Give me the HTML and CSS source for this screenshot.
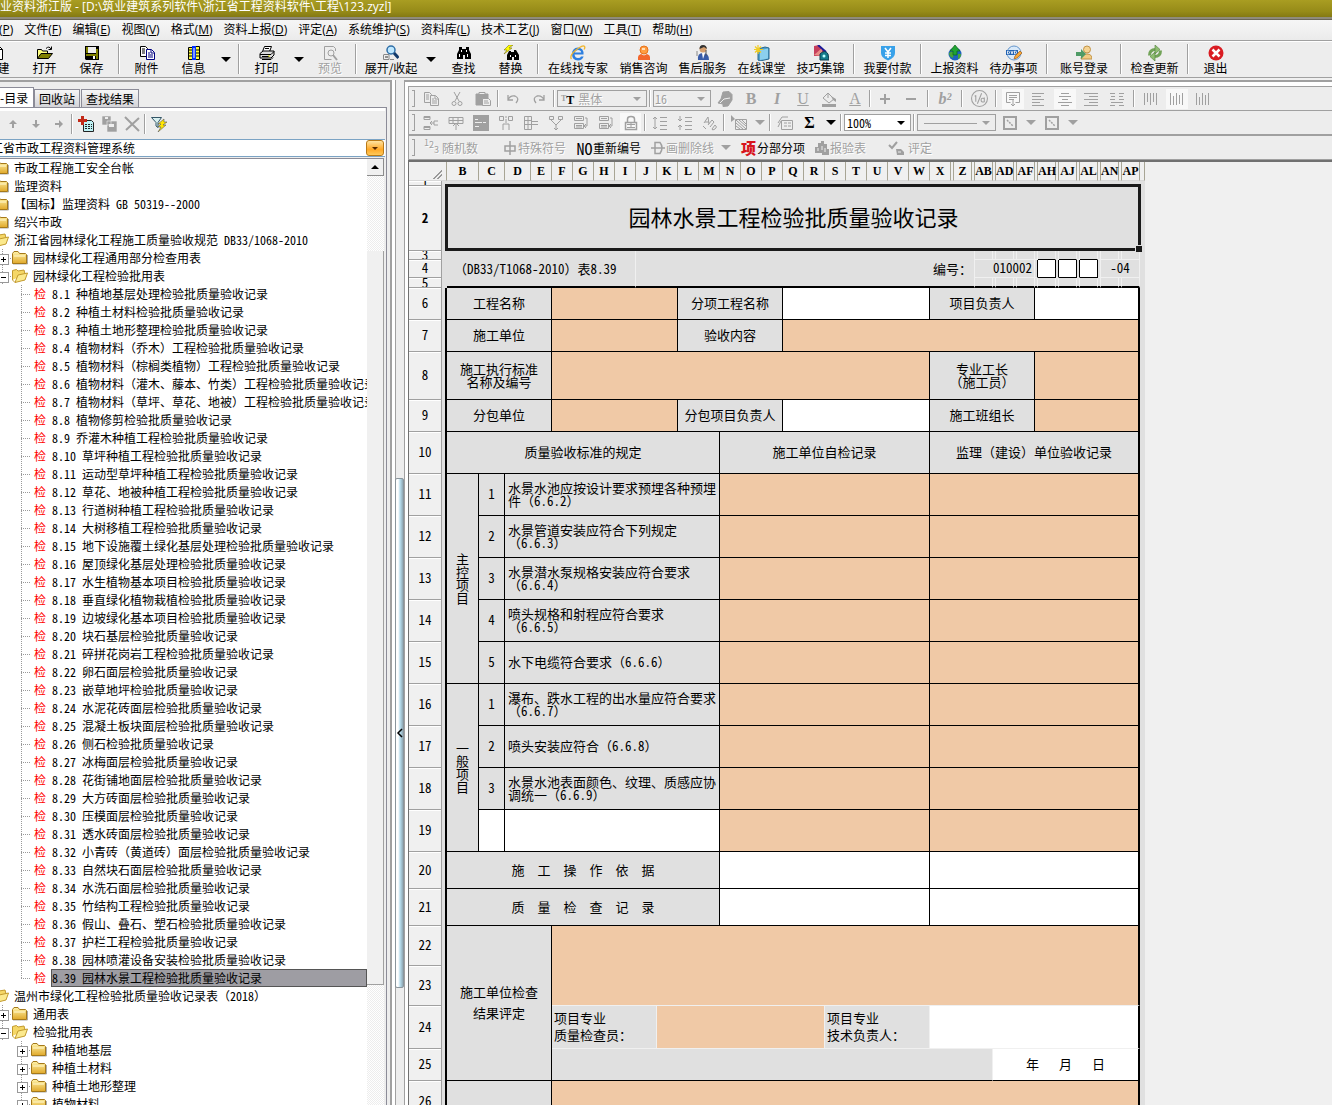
FILE: index.html
```html
<!DOCTYPE html>
<html lang="zh-CN">
<head>
<meta charset="utf-8">
<title>筑业资料浙江版</title>
<link rel="stylesheet" href="styles.css">
</head>
<body>
<svg class="defs" aria-hidden="true">
  <defs>
    <linearGradient id="gold" x1="0" y1="0" x2="0" y2="1"><stop offset="0" stop-color="#fff3a8"/><stop offset="1" stop-color="#e0a82a"/></linearGradient>
    <symbol id="folder" viewBox="0 0 16 16"><path d="M1 14h14.5V5" fill="none" stroke="#777" opacity=".6"/><path d="M.5 13.500V3.500l1.500-2h4l1.500 2h6l1 1v9z" fill="url(#gold)" stroke="#a5791a"/><path d="M2 6h11" stroke="#fff8cf"/></symbol>
    <symbol id="folder-open" viewBox="0 0 16 16"><path d="M.5 12V2.500l4-1 1.500 1.500 6-1 1 4" fill="#f5d766" stroke="#c29a2e"/><path d="M3 14.500 6 7l9.500-2-2.500 7z" fill="#fbe98d" stroke="#c29a2e"/><path d="M.5 12 3 14.500" stroke="#c29a2e"/></symbol>
    <symbol id="new" viewBox="0 0 16 16"><path d="M3.500 1.500h6l3 3v10h-9z" fill="#fff" stroke="#000"/><path d="M9.500 1.500v3h3" fill="none" stroke="#000"/></symbol>
    <symbol id="open" viewBox="0 0 16 16"><path d="M.5 13.500v-9h4l1 1.500h5v2" fill="#ffff80" stroke="#000"/><path d="M.5 13.500 4 8.500h11.500l-4 5z" fill="#808000" stroke="#000"/><path d="M9 3.500q3-3 5 .5m.5-2.500v3h-3" fill="none" stroke="#000"/></symbol>
    <symbol id="save" viewBox="0 0 16 16"><path d="M1 1h14v14H2l-1-1z" fill="#000"/><path d="M2 2h2v6H2zM12 4h2v10h-2zM2 9h12v2H2z" fill="#808000"/><path d="M4 2h8v6H4z" fill="#eee"/><path d="M9 11h2v3H9z" fill="#fff"/></symbol>
    <symbol id="attach" viewBox="0 0 16 16"><path d="M1.500 1.500h5l2 2v8h-7z" fill="#fff" stroke="#000"/><path d="M3 4h3M3 6h3M3 8h3" stroke="#000"/><path d="M7.500 4.500h5l3 3v7h-8z" fill="#fff" stroke="#000080"/><path d="M12 5v3h3M9 8h2M9 10h5M9 12h5" fill="none" stroke="#000080"/></symbol>
    <symbol id="info" viewBox="0 0 16 16"><path d="M2.500 2.500h4v12h-4zM9.500 1.500h4v13h-4z" fill="#ffff40" stroke="#000"/><path d="M6 1h4v14H6z" fill="#0030ff"/><path d="M3 5h3M3 8h3M3 11h3M10 5h3M10 8h3M10 11h3" stroke="#000"/><path d="M8 3v10" stroke="#fff"/></symbol>
    <symbol id="print" viewBox="0 0 16 16"><path d="m5.500 1.500h7L10.500 6.500h-7z" fill="#fff" stroke="#000"/><path d="M1 8.500 4 6h11v4l-3 3H1z" fill="#ddd" stroke="#000"/><path d="M1 9.500h11l3-3M3 14.500h9l2-2M3 11.500h7M6 3.500h4" fill="none" stroke="#000"/><path d="M9 11h2" stroke="#dd0"/></symbol>
    <symbol id="preview" viewBox="0 0 16 16" fill="none" stroke="#a0a0a0"><path d="M13.500 6V3.500l-2-2h-9v13h7"/><circle cx="9" cy="8" r="3"/><path d="m11 10 4 5" stroke-width="2"/></symbol>
    <symbol id="expand" viewBox="0 0 16 16"><path d="M1 9.500h5v5H.5v-5M7 14.500h4" fill="#eee" stroke="#888"/><path d="M2 12h3" stroke="#333"/><circle cx="8" cy="5" r="4" fill="#bfe8ff" stroke="#2f6fa8" stroke-width="1.500"/><path d="m11 8 4.500 5" stroke="#123a6b" stroke-width="3"/></symbol>
    <symbol id="find" viewBox="0 0 16 16"><path d="M3 2h3v2h4V2h3v3l2 4v5H9v-4H7v4H1V9l2-4z"/><path d="M3 9h1v3H3zM11 9h1v3h-1zM5 5h1v2H5zM10 5h1v2h-1z" fill="#fff"/></symbol>
    <symbol id="replace" viewBox="0 0 16 16"><path d="M6 6h2v1h3V5h2l3 5v5h-5v-3H9v3H4v-5z"/><path d="M7 10h1v2H7zM12 10h1v2h-1z" fill="#fff"/><path d="m6 0-5 5h3l-3 4 8-6H6l4-3z" fill="#ff0" stroke="#665c00" stroke-width=".5"/></symbol>
    <symbol id="ie" viewBox="0 0 16 16"><path d="M13.500 9.500H4.500Q5 13 8 13q2.500 0 3-1.500h2.700Q12 15.500 8 15.500 2 15 2 9t6-6.500q6 .5 5.500 7M4.700 7.500h6.500Q11 5 8 5 5.300 5 4.700 7.500" fill="#2d7fe0"/><path d="M1.500 14Q-1 11 6 5q7-5.500 8.500-3.500.8 1-.5 3" fill="none" stroke="#f0b52c" stroke-width="1.300"/></symbol>
    <symbol id="person" viewBox="0 0 16 16"><circle cx="8" cy="5" r="4" fill="#ff9d42" stroke="#e8731b"/><path d="M2 15V12q0-2 3-3l3 1.500L11 9q3 1 3 3v3z" fill="#f3672d"/><path d="M6 4h3" stroke="#ffe0bc" stroke-width="2"/></symbol>
    <symbol id="service" viewBox="0 0 16 16"><circle cx="8" cy="4" r="3.500" fill="#d7a06f"/><path d="M4.500 4q0-4 3.500-4t4 4L9 2z" fill="#333"/><path d="M3 15q-1-7 5-7 6 0 6 7z" fill="#385ba8"/><path d="m7 8 1 6 2-6z" fill="#fff"/><path d="M2 6v5" stroke="#888"/><path d="M11 5v6" stroke="#555"/></symbol>
    <symbol id="class" viewBox="0 0 16 16"><path d="m4 4 7-2 4 1v11l-9 2-2-1z" fill="#4f9fcb" stroke="#28688f"/><path d="m6 5 8-1.500v10L6 15z" fill="#8cd0ee"/><path d="M4 0v9M0 4.500h9M1 1.500l6 6M7 1.500l-6 6" stroke="#f0cc22" stroke-width="1.200"/></symbol>
    <symbol id="tips" viewBox="0 0 16 16"><path d="m1 1 5-1 6 6-4 5H1z" fill="#c63f5c"/><path d="M1 10 9 3v8z" fill="#e88e88"/><path d="m5 0 8 7" stroke="#1b1b98" stroke-width="2"/><path d="M7 9q5-5 8 0l1 6H7z" fill="#147b8b" stroke="#0a3d4d"/><circle cx="11" cy="11" r="1.500" fill="#bff"/></symbol>
    <symbol id="pay" viewBox="0 0 16 16"><path d="M1 1h14v7q0 5-7 7.500Q1 13 1 8z" fill="#38a1e9"/><path d="m5 3 3 4 3-4M5 8h6M5 10.500h6M8 7v6" fill="none" stroke="#fff" stroke-width="1.500"/></symbol>
    <symbol id="upload" viewBox="0 0 16 16"><circle cx="8" cy="9" r="6.500" fill="#1d62be"/><path d="M2 8q3-3 5 0l-1 5Q2 12 2 8M11 9h3q0 4-3 5z" fill="#45a536"/><path d="M8 0 3 6h3v4h4V6h3z" fill="#20a433" stroke="#0b6418" stroke-width=".7"/></symbol>
    <symbol id="todo" viewBox="0 0 16 16"><circle cx="8" cy="8" r="7" fill="#d8e9fa" stroke="#6596cb"/><path d="M0 5h12v5H0z" fill="#2364b3"/><path d="M1.500 6v3h1L3.500 8V7l-1-1zM5 6l1 3 1-3M8.500 6v3h1l1-1V7l-1-1z" fill="none" stroke="#fff" stroke-width=".8"/><path d="m8 14 1-3 5-5 2 2-5 5z" fill="#f6a83a" stroke="#a45d16" stroke-width=".7"/></symbol>
    <symbol id="login" viewBox="0 0 16 16"><circle cx="11" cy="4.500" r="3.500" fill="#f5d392" stroke="#c29447"/><path d="M5 14q0-5 6-5 5 0 5 5z" fill="#f2cb84" stroke="#c29447"/><path d="M0 7h5V4l5 5-5 5v-3H0z" fill="#4f9b66"/></symbol>
    <symbol id="update" viewBox="0 0 16 16" fill="none" stroke="#72a358" stroke-width="3"><path d="M2.500 10.500q0-6 6-6M13.500 5.500q0 6-6 6"/><path d="m8 0 5 4.500-5 4.500zM8 7l-5 4.500L8 16z" fill="#8fbe72" stroke="#5c8a45" stroke-width=".7"/></symbol>
    <symbol id="exit" viewBox="0 0 16 16"><circle cx="8" cy="8" r="7.500" fill="#d91c22"/><path d="m4.500 4.500 7 7m0-7-7 7" stroke="#fff" stroke-width="2.500"/></symbol>
    <symbol id="add-item" viewBox="0 0 16 16"><path d="M5.500 4.500h8l2 2v9h-10z" fill="#bdf1f4" stroke="#222"/><path d="M7 8.500h7M7 10.500h7M7 12.500h7" stroke="#222" stroke-dasharray="2 1"/><path d="M4.500 0v9M0 4.500h9" stroke="#c22918" stroke-width="3"/></symbol>
    <symbol id="multi" viewBox="0 0 16 16"><path d="M1 0h9v9H1zM6 5h10v11H6z" fill="#a0a0a0" stroke="#eee" stroke-width=".6"/><path d="M4 1h3v2H4zM8 8h5v3H8z" fill="#eee"/></symbol>
    <symbol id="cross" viewBox="0 0 16 16"><path d="m1 1 14 14M15 2 2 14" stroke="#a0a0a0" stroke-width="2"/></symbol>
    <symbol id="filter" viewBox="0 0 16 16"><path d="M.5 1.500h10L7 6.500v5L5 10V6.500z" fill="#d8f0f0" stroke="#356"/><path d="m13 3-6 5h3l-3 3h3l-3 5 8-7h-3l4-3h-3z" fill="#ffe600" stroke="#555" stroke-width=".6"/></symbol>
    <symbol id="arr-up" viewBox="0 0 16 16"><path d="m8 4 4 4H9v4H7V8H4z" fill="#a0a0a0"/></symbol>
    <symbol id="arr-down" viewBox="0 0 16 16"><path d="m8 12 4-4H9V4H7v4H4z" fill="#a0a0a0"/></symbol>
    <symbol id="arr-right" viewBox="0 0 16 16"><path d="m12 8-4 4V9H4V7h4V4z" fill="#a0a0a0"/></symbol>
    <symbol id="copy" viewBox="0 0 16 16"><path d="M1.500 1.500h5l2 2v8h-7zM3 4h3M3 6h3M3 8h3"/><path d="M7.500 4.500h5l3 3v7h-8z" fill="#eee"/><path d="M12 5v3h3M9 8h2M9 10h5M9 12h5"/></symbol>
    <symbol id="cut" viewBox="0 0 16 16"><path d="m5 1 5 9M11 1l-5 9"/><circle cx="5" cy="12.500" r="2"/><circle cx="11" cy="12.500" r="2"/></symbol>
    <symbol id="paste" viewBox="0 0 16 16"><path d="M1 3h12v11H1z" fill="#a0a0a0"/><path d="M4 1.500h6v2H4z" fill="#eee"/><path d="M7.500 7.500h6l2 2v5h-8z" fill="#eee"/><path d="M9 10h4M9 12h5"/></symbol>
    <symbol id="undo" viewBox="0 0 16 16"><path d="M3 4v5h5M3 9q2-5 7-4 5 2 1 7" stroke-width="1.300"/></symbol>
    <symbol id="redo" viewBox="0 0 16 16"><path d="M13 4v5H8M13 9q-2-5-7-4-5 2-1 7" stroke-width="1.300"/></symbol>
    <symbol id="face" viewBox="0 0 16 16"><path d="m6 1 6-.5 3 3V9l-4 6-5 .5V13l-5-1 3-4z" fill="#a0a0a0"/><path d="m3 12 4-4 6-1" stroke="#eee"/></symbol>
    <symbol id="bucket" viewBox="0 0 16 16"><path d="m7 2 6 6-5 4-6-5z"/><path d="m10 5 5 3v3l-3-2zM1 13h14v3H1z" fill="#a0a0a0" stroke="none"/><path d="M7 2v5"/></symbol>
    <symbol id="plus" viewBox="0 0 16 16"><path d="M8 3v10M3 8h10" stroke-width="2"/></symbol>
    <symbol id="minus" viewBox="0 0 16 16"><path d="M3 8h10" stroke-width="2"/></symbol>
    <symbol id="frac" viewBox="0 0 16 16"><circle cx="8" cy="8" r="7.500"/><path d="M10 3 6 13M4.500 5v6M3.500 6l1-1M12.500 8q-3-1-3 1.500t3 1.500V7"/></symbol>
    <symbol id="wrap" viewBox="0 0 16 16"><path d="M1.500 1.500h13v10h-4M1.500 1.500v10h4M4 4.500h8M4 6.500h8M4 8.500h5M8 9v6M6 13l2 2 2-2"/></symbol>
    <symbol id="al-left" viewBox="0 0 16 16"><path d="M1 2.500h12M1 5.500h9M1 8.500h12M1 11.500h8M1 14.500h12"/></symbol>
    <symbol id="al-center" viewBox="0 0 16 16"><path d="M4 2.500h8M2 5.500h12M5 8.500h6M1 11.500h14M4 14.500h8"/></symbol>
    <symbol id="al-right" viewBox="0 0 16 16"><path d="M1 2.500h14M6 5.500h9M1 8.500h14M6 11.500h9M1 14.500h14"/></symbol>
    <symbol id="al-just" viewBox="0 0 16 16"><path d="M1 2.500h5M10 2.500h5M2 5.500h4M10 5.500h4M1 8.500h5M10 8.500h5M2 11.500h12M1 14.500h5M10 14.500h5"/></symbol>
    <symbol id="v-top" viewBox="0 0 16 16"><path d="M1.500 2v12M4.500 2v9M7.500 2v12M10.500 2v9M13.500 2v12"/></symbol>
    <symbol id="v-mid" viewBox="0 0 16 16"><path d="M1.500 2v12M4.500 5v9M7.500 2v12M10.500 4v9M13.500 2v12"/></symbol>
    <symbol id="v-bot" viewBox="0 0 16 16"><path d="M1.500 2v12M4.500 6v8M7.500 2v12M10.500 4v10M13.500 2v12"/></symbol>
    <symbol id="ins-row" viewBox="0 0 16 16"><path d="M1 1.500h6v3H1zM1 11.500h6v3H1zM1 2.500h6M1 12.500h6M7 8h4M9 6 7 8l2 2M15 6h-4v4h4"/></symbol>
    <symbol id="ins-col" viewBox="0 0 16 16"><path d="M1 2.500h14v6H1zM1 5.500h14M5 2v6M10 2v6M8 8v7M5 11l3-3 3 3"/></symbol>
    <symbol id="block" viewBox="0 0 16 16"><path d="M0 0h16v16H0z" fill="#a0a0a0" stroke="none"/><path d="M2 4.500h3M2 7.500h7M10 7.500h3M2 11.500h4" stroke="#eee"/></symbol>
    <symbol id="merge" viewBox="0 0 16 16"><path d="M1.500 1.500h4v4h-4zM10.500 1.500h4v4h-4zM8 4v4M5 15V9h6v6M8 1v2"/></symbol>
    <symbol id="split" viewBox="0 0 16 16"><path d="M1.500 1.500h7v13h-7zM1 5.500h7M1 9.500h7M5 1v13M9 6.500h6M9 9.500h6"/></symbol>
    <symbol id="join" viewBox="0 0 16 16"><path d="M1.500 1.500h4v3h-4zM10.500 1.500h4v3h-4zM3 5l5 5 5-5M8 10v5M6 13l2 2 2-2"/></symbol>
    <symbol id="stack" viewBox="0 0 16 16"><path d="M1.500 1.500h9v4h-9zM1.500 8.500h9v5h-9zM3 3.500h6M3 10.500h6M3 12h6M12 3h2v8h-3M13 9l-2 2 2 2"/></symbol>
    <symbol id="lock" viewBox="0 0 16 16"><path d="M4.500 7V4q0-2.500 3.500-2.500T11.500 4v3M2.500 7.500h11v7h-11z" stroke-width="1.500"/><path d="M4 9.500h8M4 12.500h8M8 8v5"/></symbol>
    <symbol id="lh-up" viewBox="0 0 16 16"><path d="M3 2v12M1 4l2-2 2 2M1 12l2 2 2-2M8 2.500h7M8 6.500h7M8 10.500h7M8 14.500h7"/></symbol>
    <symbol id="lh-down" viewBox="0 0 16 16"><path d="M3 1v5M1 4l2 2 2-2M3 15v-5M1 12l2-2 2 2M8 2.500h7M8 6.500h7M8 10.500h7M8 14.500h7"/></symbol>
    <symbol id="rotate" viewBox="0 0 16 16"><path d="m2 8 4-6 1 7M3 7h4M6 10l4-5 2 2-4 5M10 14l3-4q3 2 0 4t-3 0M1 11l3 3"/></symbol>
    <symbol id="grid-pic" viewBox="0 0 16 16"><path d="M4.500 4.500h11v10h-11zM5 5l10 9M8 5l7 6M5 8l7 6M11 5l4 4M5 11l4 3"/><path d="M0 0v7l4-3z" fill="#a0a0a0" stroke="none"/></symbol>
    <symbol id="form" viewBox="0 0 16 16"><path d="M4.500 5.500h11v9h-11zM7 8h3M7 11h3M11 8h3M11 11h3M1 8l4-6h6M1 12 4 6"/></symbol>
    <symbol id="box" viewBox="0 0 16 16"><path d="M2 2h12v12H2z" stroke-width="2"/><path d="m5 5 6 6" stroke-width="1.500" stroke-dasharray="2 1"/></symbol>
    <symbol id="symbol-mark" viewBox="0 0 16 16"><path d="M8 1v14M3 6h10v5H3z" stroke-width="1.500"/></symbol>
    <symbol id="strike" viewBox="0 0 16 16"><path d="M5 2.500h5q4 5 0 11H5zM1 8h14" stroke-width="1.500"/></symbol>
    <symbol id="report" viewBox="0 0 16 16"><path d="M1 7h3V3h3V1h3v3h3v5h2v6H8v-2H1z" fill="#a0a0a0" stroke="none"/><path d="M4 8v3M8 6v4M11 8v4" stroke="#eee"/></symbol>
    <symbol id="check" viewBox="0 0 16 16"><path d="m1 5 3 3 5-6" stroke-width="2"/><path d="M8 9h5l3 3v3H9z" fill="#a0a0a0" stroke="none"/><path d="M10 12h3" stroke="#eee"/></symbol>
  </defs>
</svg>

<div class="app">
  <header class="titlebar">业资料浙江版 - [D:\筑业建筑系列软件\浙江省工程资料软件\工程\123.zyzl]</header>

  <nav class="menubar">
    <a href="#">(<u>P</u>)</a><a href="#">文件(<u>F</u>)</a><a href="#">编辑(<u>E</u>)</a><a href="#">视图(<u>V</u>)</a><a href="#">格式(<u>M</u>)</a><a href="#">资料上报(<u>D</u>)</a><a href="#">评定(<u>A</u>)</a><a href="#">系统维护(<u>S</u>)</a><a href="#">资料库(<u>L</u>)</a><a href="#">技术工艺(<u>J</u>)</a><a href="#">窗口(<u>W</u>)</a><a href="#">工具(<u>T</u>)</a><a href="#">帮助(<u>H</u>)</a>
  </nav>

  <div class="toolbar">
    <button class="tool"><svg><use href="#new"/></svg>新建</button>
    <button class="tool"><svg><use href="#open"/></svg>打开</button>
    <button class="tool"><svg><use href="#save"/></svg>保存</button>
    <span class="sep"></span>
    <button class="tool"><svg><use href="#attach"/></svg>附件</button>
    <button class="tool"><svg><use href="#info"/></svg>信息</button>
    <button class="drop" aria-label="信息选项"></button>
    <span class="sep"></span>
    <button class="tool"><svg><use href="#print"/></svg>打印</button>
    <button class="drop" aria-label="打印选项"></button>
    <button class="tool off" disabled><svg><use href="#preview"/></svg>预览</button>
    <span class="sep"></span>
    <button class="tool mid"><svg><use href="#expand"/></svg>展开/收起</button>
    <button class="drop" aria-label="展开选项"></button>
    <button class="tool"><svg><use href="#find"/></svg>查找</button>
    <button class="tool"><svg><use href="#replace"/></svg>替换</button>
    <span class="sep"></span>
    <button class="tool xwide"><svg><use href="#ie"/></svg>在线找专家</button>
    <button class="tool wide"><svg><use href="#person"/></svg>销售咨询</button>
    <button class="tool wide"><svg><use href="#service"/></svg>售后服务</button>
    <button class="tool wide"><svg><use href="#class"/></svg>在线课堂</button>
    <button class="tool wide"><svg><use href="#tips"/></svg>技巧集锦</button>
    <span class="sep"></span>
    <button class="tool wide"><svg><use href="#pay"/></svg>我要付款</button>
    <span class="sep"></span>
    <button class="tool wide"><svg><use href="#upload"/></svg>上报资料</button>
    <button class="tool wide"><svg><use href="#todo"/></svg>待办事项</button>
    <span class="sep"></span>
    <button class="tool account"><svg><use href="#login"/></svg>账号登录</button>
    <span class="sep"></span>
    <button class="tool wide"><svg><use href="#update"/></svg>检查更新</button>
    <span class="sep"></span>
    <button class="tool"><svg><use href="#exit"/></svg>退出</button>
  </div>

  <main class="work">
    <aside class="side">
      <div class="tabs"><button class="tab active">-目录</button><button class="tab">回收站</button><button class="tab">查找结果</button></div>
      <div class="pane">
        <div class="pane-tools">
          <button disabled aria-label="上移"><svg><use href="#arr-up"/></svg></button>
          <button disabled aria-label="下移"><svg><use href="#arr-down"/></svg></button>
          <button disabled aria-label="右移"><svg><use href="#arr-right"/></svg></button>
          <span class="sep s4"></span>
          <button aria-label="新增"><svg><use href="#add-item"/></svg></button>
          <button disabled aria-label="复制"><svg><use href="#multi"/></svg></button>
          <button disabled aria-label="删除"><svg><use href="#cross"/></svg></button>
          <span class="sep s4"></span>
          <button aria-label="筛选"><svg><use href="#filter"/></svg></button>
        </div>
        <div class="system">
          <select aria-label="资料系统"><option>江省市政工程资料管理系统</option></select>
          <span class="chev"></span>
        </div>
        <div class="tree-box">
          <ul class="tree">
            <li><i></i><svg><use href="#folder"/></svg><span>市政工程施工安全台帐</span></li>
            <li><i></i><svg><use href="#folder"/></svg><span>监理资料</span></li>
            <li><i></i><svg><use href="#folder"/></svg><span>【国标】监理资料 GB 50319--2000</span></li>
            <li><i></i><svg><use href="#folder"/></svg><span>绍兴市政</span></li>
            <li><i></i><svg><use href="#folder-open"/></svg><span>浙江省园林绿化工程施工质量验收规范 DB33/1068-2010</span></li>
            <li class="l2"><i class="box plus"></i><svg><use href="#folder"/></svg><span>园林绿化工程通用部分检查用表</span></li>
            <li class="l2"><i class="box"></i><svg><use href="#folder-open"/></svg><span>园林绿化工程检验批用表</span></li>
            <li class="leaf"><i></i><b>检</b><span>8.1 种植地基层处理检验批质量验收记录</span></li>
            <li class="leaf"><i></i><b>检</b><span>8.2 种植土材料检验批质量验收记录</span></li>
            <li class="leaf"><i></i><b>检</b><span>8.3 种植土地形整理检验批质量验收记录</span></li>
            <li class="leaf"><i></i><b>检</b><span>8.4 植物材料<span class="fw">（乔木）</span>工程检验批质量验收记录</span></li>
            <li class="leaf"><i></i><b>检</b><span>8.5 植物材料<span class="fw">（棕榈类植物）</span>工程检验批质量验收记录</span></li>
            <li class="leaf"><i></i><b>检</b><span>8.6 植物材料<span class="fw">（灌木、藤本、竹类）</span>工程检验批质量验收记录</span></li>
            <li class="leaf"><i></i><b>检</b><span>8.7 植物材料<span class="fw">（草坪、草花、地被）</span>工程检验批质量验收记录</span></li>
            <li class="leaf"><i></i><b>检</b><span>8.8 植物修剪检验批质量验收记录</span></li>
            <li class="leaf"><i></i><b>检</b><span>8.9 乔灌木种植工程检验批质量验收记录</span></li>
            <li class="leaf"><i></i><b>检</b><span>8.10 草坪种植工程检验批质量验收记录</span></li>
            <li class="leaf"><i></i><b>检</b><span>8.11 运动型草坪种植工程检验批质量验收记录</span></li>
            <li class="leaf"><i></i><b>检</b><span>8.12 草花、地被种植工程检验批质量验收记录</span></li>
            <li class="leaf"><i></i><b>检</b><span>8.13 行道树种植工程检验批质量验收记录</span></li>
            <li class="leaf"><i></i><b>检</b><span>8.14 大树移植工程检验批质量验收记录</span></li>
            <li class="leaf"><i></i><b>检</b><span>8.15 地下设施覆土绿化基层处理检验批质量验收记录</span></li>
            <li class="leaf"><i></i><b>检</b><span>8.16 屋顶绿化基层处理检验批质量验收记录</span></li>
            <li class="leaf"><i></i><b>检</b><span>8.17 水生植物基本项目检验批质量验收记录</span></li>
            <li class="leaf"><i></i><b>检</b><span>8.18 垂直绿化植物栽植检验批质量验收记录</span></li>
            <li class="leaf"><i></i><b>检</b><span>8.19 边坡绿化基本项目检验批质量验收记录</span></li>
            <li class="leaf"><i></i><b>检</b><span>8.20 块石基层检验批质量验收记录</span></li>
            <li class="leaf"><i></i><b>检</b><span>8.21 碎拼花岗岩工程检验批质量验收记录</span></li>
            <li class="leaf"><i></i><b>检</b><span>8.22 卵石面层检验批质量验收记录</span></li>
            <li class="leaf"><i></i><b>检</b><span>8.23 嵌草地坪检验批质量验收记录</span></li>
            <li class="leaf"><i></i><b>检</b><span>8.24 水泥花砖面层检验批质量验收记录</span></li>
            <li class="leaf"><i></i><b>检</b><span>8.25 混凝土板块面层检验批质量验收记录</span></li>
            <li class="leaf"><i></i><b>检</b><span>8.26 侧石检验批质量验收记录</span></li>
            <li class="leaf"><i></i><b>检</b><span>8.27 冰梅面层检验批质量验收记录</span></li>
            <li class="leaf"><i></i><b>检</b><span>8.28 花街铺地面层检验批质量验收记录</span></li>
            <li class="leaf"><i></i><b>检</b><span>8.29 大方砖面层检验批质量验收记录</span></li>
            <li class="leaf"><i></i><b>检</b><span>8.30 压模面层检验批质量验收记录</span></li>
            <li class="leaf"><i></i><b>检</b><span>8.31 透水砖面层检验批质量验收记录</span></li>
            <li class="leaf"><i></i><b>检</b><span>8.32 小青砖<span class="fw">（黄道砖）</span>面层检验批质量验收记录</span></li>
            <li class="leaf"><i></i><b>检</b><span>8.33 自然块石面层检验批质量验收记录</span></li>
            <li class="leaf"><i></i><b>检</b><span>8.34 水洗石面层检验批质量验收记录</span></li>
            <li class="leaf"><i></i><b>检</b><span>8.35 竹结构工程检验批质量验收记录</span></li>
            <li class="leaf"><i></i><b>检</b><span>8.36 假山、叠石、塑石检验批质量验收记录</span></li>
            <li class="leaf"><i></i><b>检</b><span>8.37 护栏工程检验批质量验收记录</span></li>
            <li class="leaf"><i></i><b>检</b><span>8.38 园林喷灌设备安装检验批质量验收记录</span></li>
            <li class="leaf last"><i></i><b>检</b><span class="selected">8.39 园林水景工程检验批质量验收记录</span></li>
            <li><i></i><svg><use href="#folder-open"/></svg><span>温州市绿化工程检验批质量验收记录表<span class="fw">（</span>2018<span class="fw">）</span></span></li>
            <li class="l2"><i class="box plus"></i><svg><use href="#folder"/></svg><span>通用表</span></li>
            <li class="l2"><i class="box"></i><svg><use href="#folder-open"/></svg><span>检验批用表</span></li>
            <li class="l3"><i class="box plus"></i><svg><use href="#folder"/></svg><span>种植地基层</span></li>
            <li class="l3"><i class="box plus"></i><svg><use href="#folder"/></svg><span>种植土材料</span></li>
            <li class="l3"><i class="box plus"></i><svg><use href="#folder"/></svg><span>种植土地形整理</span></li>
            <li class="l3"><i class="box plus"></i><svg><use href="#folder"/></svg><span>植物材料</span></li>
          </ul>
          <div class="scroll"><button class="scroll-up" aria-label="向上滚动"></button><div class="thumb"></div></div>
        </div>
      </div>
    </aside>

    <div class="splitter"><button aria-label="收起侧栏"><svg viewBox="0 0 8 10"><path d="M6 1 2 5l4 4" fill="none" stroke="#000" stroke-width="1.500"/></svg></button></div>

    <section class="doc">
      <div class="bar">
        <span class="grip"></span>
        <button aria-label="复制"><svg><use href="#copy"/></svg></button><button aria-label="剪切"><svg><use href="#cut"/></svg></button><button aria-label="粘贴"><svg><use href="#paste"/></svg></button>
        <span class="sep s4"></span>
        <button aria-label="撤销"><svg><use href="#undo"/></svg></button><button aria-label="重做"><svg><use href="#redo"/></svg></button>
        <span class="sep s4"></span>
        <span class="combo font"><em>T</em><em class="t2">T</em><select aria-label="字体" disabled><option>黑体</option></select></span>
        <span class="sep s4"></span>
        <span class="combo size"><select aria-label="字号" disabled><option>16</option></select></span>
        <button aria-label="样式"><svg><use href="#face"/></svg></button><button class="glyph"><b>B</b></button><button class="glyph"><b><i>I</i></b></button><button class="glyph"><u>U</u></button><button aria-label="填充"><svg><use href="#bucket"/></svg></button><button class="glyph"><u>A</u></button>
        <span class="sep s4"></span>
        <button aria-label="放大"><svg><use href="#plus"/></svg></button><button aria-label="缩小"><svg><use href="#minus"/></svg></button>
        <span class="sep"></span>
        <button class="glyph"><b><i>b²</i></b></button>
        <span class="sep"></span>
        <button aria-label="分数"><svg class="big"><use href="#frac"/></svg></button>
        <span class="sep"></span>
        <button class="on" aria-label="自动换行"><svg><use href="#wrap"/></svg></button><button aria-label="左对齐"><svg><use href="#al-left"/></svg></button><button class="on" aria-label="居中"><svg><use href="#al-center"/></svg></button><button aria-label="右对齐"><svg><use href="#al-right"/></svg></button><button aria-label="分散对齐"><svg><use href="#al-just"/></svg></button>
        <span class="sep"></span>
        <button aria-label="顶端对齐"><svg><use href="#v-top"/></svg></button><button class="on" aria-label="垂直居中"><svg><use href="#v-mid"/></svg></button><button aria-label="底端对齐"><svg><use href="#v-bot"/></svg></button>
      </div>
      <div class="bar second">
        <span class="grip"></span>
        <button aria-label="插入行"><svg><use href="#ins-row"/></svg></button><button aria-label="插入列"><svg><use href="#ins-col"/></svg></button><button aria-label="区块"><svg><use href="#block"/></svg></button><button aria-label="合并"><svg><use href="#merge"/></svg></button><button aria-label="拆分"><svg><use href="#split"/></svg></button><button aria-label="汇合"><svg><use href="#join"/></svg></button><button aria-label="上移行"><svg><use href="#stack"/></svg></button><button aria-label="下移行"><svg><use href="#stack"/></svg></button><button class="on" aria-label="锁定"><svg><use href="#lock"/></svg></button>
        <span class="sep s4"></span>
        <button aria-label="增加行距"><svg><use href="#lh-up"/></svg></button><button aria-label="减少行距"><svg><use href="#lh-down"/></svg></button><button aria-label="旋转"><svg><use href="#rotate"/></svg></button>
        <span class="sep s4"></span>
        <button aria-label="图片"><svg><use href="#grid-pic"/></svg></button><button class="drop" aria-label="图片选项"></button>
        <span class="sep s4"></span>
        <button aria-label="表单"><svg><use href="#form"/></svg></button><button class="glyph dark"><b>Σ</b></button><button class="drop dark" aria-label="求和选项"></button>
        <span class="sep s4"></span>
        <span class="combo zoom"><select aria-label="缩放"><option>100%</option></select></span>
        <span class="sep s4"></span>
        <span class="combo line"><select aria-label="线型" disabled><option></option></select></span>
        <button aria-label="边框"><svg><use href="#box"/></svg></button><button class="drop" aria-label="边框选项"></button><button aria-label="斜线"><svg><use href="#box"/></svg></button><button class="drop" aria-label="斜线选项"></button>
      </div>
      <div class="bar third">
        <span class="grip"></span>
        <button class="text random" disabled><em class="num"><sup>1</sup>2<sub>3</sub></em>随机数</button>
        <button class="text" disabled><svg><use href="#symbol-mark"/></svg>特殊符号</button>
        <button class="text dark"><em class="no">NO</em>重新编号</button>
        <button class="text strike" disabled><svg><use href="#strike"/></svg>画删除线</button>
        <button class="drop" aria-label="删除线选项"></button>
        <button class="text dark"><em class="item">项</em>分部分项</button>
        <button class="text" disabled><svg><use href="#report"/></svg>报验表</button>
        <button class="text" disabled><svg class="gap"><use href="#check"/></svg>评定</button>
      </div>

      <div class="sheet">
        <table>
          <colgroup><col class="c33"><col class="c5"><col class="c32"><col class="c26" span="2"><col class="c21" span="20"><col class="c3"><col class="c18"><col class="c3"><col class="c18"><col class="c3"><col class="c18"><col class="c3"><col class="c18"><col class="c3"><col class="c18"><col class="c3"><col class="c18"><col class="c3"><col class="c18"><col class="c3"><col class="c18"><col class="c3"><col class="c18"><col class="c5"></colgroup>
          <thead>
            <tr class="h19"><th class="corner" colspan="2"></th><th>B</th><th>C</th><th>D</th><th>E</th><th>F</th><th>G</th><th>H</th><th>I</th><th>J</th><th>K</th><th>L</th><th>M</th><th>N</th><th>O</th><th>P</th><th>Q</th><th>R</th><th>S</th><th>T</th><th>U</th><th>V</th><th>W</th><th>X</th><th></th><th>Z</th><th></th><th>AB</th><th></th><th>AD</th><th></th><th>AF</th><th></th><th>AH</th><th></th><th>AJ</th><th></th><th>AL</th><th></th><th>AN</th><th></th><th>AP</th><th></th></tr>
          </thead>
          <tbody>
            <tr class="h5"><th><div>1</div></th><td class="plain" colspan="43"></td></tr>
            <tr class="h65"><th><b>2</b></th><td class="plain"></td><td class="title" colspan="41">园林水景工程检验批质量验收记录</td><td class="plain"></td></tr>
            <tr class="h9 lite"><th><div>3</div></th><td class="plain"></td><td class="form-no" rowspan="3" colspan="8"><span class="fw">（</span>DB33/T1068-2010<span class="fw">）</span>表8.39</td><td class="no-label" rowspan="3" colspan="18">编号：</td><td></td><td></td><td></td><td></td><td></td><td></td><td class="kb"></td><td></td><td class="kb"></td><td></td><td class="kb"></td><td></td><td></td><td></td><td></td><td class="plain"></td></tr>
            <tr class="h18 lite"><th>4</th><td class="plain"></td><td class="serial" colspan="5">010002</td><td class="kr"></td><td class="tick"></td><td class="kr"></td><td class="tick"></td><td class="kr"></td><td class="tick"></td><td></td><td colspan="3">-04</td><td class="plain"></td></tr>
            <tr class="h10 lite thick"><th><div>5</div></th><td class="plain"></td><td></td><td></td><td></td><td></td><td></td><td></td><td></td><td></td><td></td><td></td><td></td><td></td><td></td><td></td><td></td><td class="plain"></td></tr>
            <tr class="h32"><th>6</th><td class="edge"></td><td colspan="4">工程名称</td><td class="o" colspan="6"></td><td colspan="5">分项工程名称</td><td class="w" colspan="7"></td><td colspan="9">项目负责人</td><td class="w end" colspan="10"></td><td class="plain"></td></tr>
            <tr class="h32"><th>7</th><td class="edge"></td><td colspan="4">施工单位</td><td class="o" colspan="6"></td><td colspan="5">验收内容</td><td class="o end" colspan="26"></td><td class="plain"></td></tr>
            <tr class="h48"><th>8</th><td class="edge"></td><td colspan="4">施工执行标准<br>名称及编号</td><td class="o" colspan="18"></td><td colspan="9">专业工长<br><span class="fw">（施工员）</span></td><td class="o end" colspan="10"></td><td class="plain"></td></tr>
            <tr class="h32"><th>9</th><td class="edge"></td><td colspan="4">分包单位</td><td class="o" colspan="6"></td><td colspan="5">分包项目负责人</td><td class="w" colspan="7"></td><td colspan="9">施工班组长</td><td class="o end" colspan="10"></td><td class="plain"></td></tr>
            <tr class="h42"><th>10</th><td class="edge"></td><td colspan="12">质量验收标准的规定</td><td colspan="10">施工单位自检记录</td><td class="end fw" colspan="19">监理（建设）单位验收记录</td><td class="plain"></td></tr>
            <tr class="h42"><th>11</th><td class="edge"></td><td class="vert" rowspan="5">主<br>控<br>项<br>目</td><td>1</td><td class="rule" colspan="10">水景水池应按设计要求预埋各种预埋件<span class="fw">（</span>6.6.2<span class="fw">）</span></td><td class="o" colspan="10"></td><td class="o end" colspan="19"></td><td class="plain"></td></tr>
            <tr class="h42"><th>12</th><td class="edge"></td><td>2</td><td class="rule" colspan="10">水景管道安装应符合下列规定<br><span class="fw">（</span>6.6.3<span class="fw">）</span></td><td class="o" colspan="10"></td><td class="o end" colspan="19"></td><td class="plain"></td></tr>
            <tr class="h42"><th>13</th><td class="edge"></td><td>3</td><td class="rule" colspan="10">水景潜水泵规格安装应符合要求<br><span class="fw">（</span>6.6.4<span class="fw">）</span></td><td class="o" colspan="10"></td><td class="o end" colspan="19"></td><td class="plain"></td></tr>
            <tr class="h42"><th>14</th><td class="edge"></td><td>4</td><td class="rule" colspan="10">喷头规格和射程应符合要求<br><span class="fw">（</span>6.6.5<span class="fw">）</span></td><td class="o" colspan="10"></td><td class="o end" colspan="19"></td><td class="plain"></td></tr>
            <tr class="h42"><th>15</th><td class="edge"></td><td>5</td><td class="rule" colspan="10">水下电缆符合要求<span class="fw">（</span>6.6.6<span class="fw">）</span></td><td class="o" colspan="10"></td><td class="o end" colspan="19"></td><td class="plain"></td></tr>
            <tr class="h42"><th>16</th><td class="edge"></td><td class="vert" rowspan="4">一<br>般<br>项<br>目</td><td>1</td><td class="rule" colspan="10">瀑布、跌水工程的出水量应符合要求<br><span class="fw">（</span>6.6.7<span class="fw">）</span></td><td class="o" colspan="10"></td><td class="o end" colspan="19"></td><td class="plain"></td></tr>
            <tr class="h42"><th>17</th><td class="edge"></td><td>2</td><td class="rule" colspan="10">喷头安装应符合<span class="fw">（</span>6.6.8<span class="fw">）</span></td><td class="o" colspan="10"></td><td class="o end" colspan="19"></td><td class="plain"></td></tr>
            <tr class="h42"><th>18</th><td class="edge"></td><td>3</td><td class="rule" colspan="10">水景水池表面颜色、纹理、质感应协调统一<span class="fw">（</span>6.6.9<span class="fw">）</span></td><td class="o" colspan="10"></td><td class="o end" colspan="19"></td><td class="plain"></td></tr>
            <tr class="h42"><th>19</th><td class="edge"></td><td class="w"></td><td class="w" colspan="10"></td><td class="o" colspan="10"></td><td class="o end" colspan="19"></td><td class="plain"></td></tr>
            <tr class="h37"><th>20</th><td class="edge"></td><td class="pre" colspan="12">施  工  操  作  依  据</td><td class="w" colspan="10"></td><td class="w end" colspan="19"></td><td class="plain"></td></tr>
            <tr class="h37"><th>21</th><td class="edge"></td><td class="pre" colspan="12">质  量  检  查  记  录</td><td class="w" colspan="10"></td><td class="w end" colspan="19"></td><td class="plain"></td></tr>
            <tr class="h40"><th>22</th><td class="edge"></td><td class="loose" colspan="4" rowspan="4">施工单位检查<br>结果评定</td><td class="o end soft" colspan="37" rowspan="2"></td><td class="plain"></td></tr>
            <tr class="h40"><th>23</th><td class="edge"></td><td class="plain"></td></tr>
            <tr class="h43"><th>24</th><td class="edge"></td><td class="sign" colspan="5">项目专业<br>质量检查员：</td><td class="o soft" colspan="8"></td><td class="sign" colspan="5">项目专业<br>技术负责人：</td><td class="w end soft" colspan="19"></td><td class="plain"></td></tr>
            <tr class="h32"><th>25</th><td class="edge"></td><td class="soft-r" colspan="23"></td><td class="w end date" colspan="14"><span>年</span><span>月</span><span>日</span></td><td class="plain"></td></tr>
            <tr class="h42"><th>26</th><td class="edge"></td><td colspan="4"></td><td class="o end" colspan="37"></td><td class="plain"></td></tr>
          </tbody>
        </table>
      </div>
    </section>
  </main>
</div>
</body>
</html>
```
FILE: styles.css
```css
* { box-sizing: border-box; }

body {
  margin: 0;
  background: #f0f0f0;
  color: #000;
  font: 12px/16px "Noto Sans CJK SC", sans-serif;
}

button, select {
  margin: 0;
  padding: 0;
  border: 0;
  background: none;
  color: inherit;
  font: inherit;
}

.defs { display: block; width: 0; height: 0; }
svg { flex: none; width: 16px; height: 16px; }

.app {
  display: flex;
  flex-direction: column;
  height: 100vh;
  overflow: hidden;
}

/* window chrome */
.titlebar {
  flex: none;
  height: 20px;
  padding-bottom: 4px;
  border-bottom: 1px solid #6b675a;
  background: linear-gradient(#a99d22, #968b18 60%, #857a13 88%, #8f8b7c 90%);
  color: #fff;
  font-family: "Open Sans", "Noto Sans CJK SC", sans-serif;
  line-height: 13px;
  white-space: nowrap;
}

.menubar {
  display: flex;
  flex: none;
  gap: 11px;
  height: 20px;
  margin-left: -1px;
  background: linear-gradient(#f6f6f6, #ebebeb);
  font-family: "Open Sans", "Noto Sans CJK SC", sans-serif;
  line-height: 20px;
  white-space: nowrap;
}
.menubar a { color: #000; text-decoration: none; }

.toolbar {
  display: flex;
  flex: none;
  align-items: stretch;
  height: 38px;
  margin-left: -26px;
  border-top: 1px solid #a0a0a0;
  border-bottom: 1px solid #a0a0a0;
  background: #ededed;
  box-shadow: inset 0 1px #fff;
}
.tool {
  display: flex;
  flex: none;
  flex-direction: column;
  align-items: center;
  width: 47px;
  padding-top: 4px;
  line-height: 14px;
  white-space: nowrap;
}
.tool.mid { width: 62px; }
.tool.wide { width: 59px; }
.tool.account { width: 66px; }
.tool.xwide { width: 72px; }
.tool.off { width: 44px; }
.off, :disabled { color: #a0a0a0; text-shadow: 1px 1px #fff; opacity: 1; }

.sep {
  flex: none;
  width: 8px;
  margin: 3px 0;
  background: linear-gradient(90deg, transparent 3px, #a0a0a0 3px, #a0a0a0 4px, #fff 4px, #fff 5px, transparent 5px);
}
.sep.s4 { width: 4px; background: linear-gradient(90deg, transparent 1px, #a0a0a0 1px, #a0a0a0 2px, #fff 2px, #fff 3px, transparent 3px); }

.drop { display: flex; flex: none; align-items: center; justify-content: center; width: 18px; }
.drop::before { content: ""; border: 5px solid transparent; border-top-color: #000; border-bottom: 0; }

.work { display: flex; flex: 1; min-height: 0; padding-top: 2px; }

/* left panel */
.side {
  display: flex;
  flex: none;
  flex-direction: column;
  width: 392px;
  padding: 5px 3px 0 0;
  border-top: 2px solid #a0a0a0;
  border-right: 2px solid #a0a0a0;
  background: #ededed;
}
.tabs { display: flex; flex: none; align-items: flex-end; height: 20px; }
.tab {
  height: 18px;
  padding: 0 4px;
  border: 1px solid #8c8c98;
  border-bottom: 0;
  background: linear-gradient(#f6f6f6, #d4d4d8);
  line-height: 18px;
  margin-right: 1px;
}
.tab.active { height: 20px; width: 34px; margin-right: 0; padding: 0 7px 0 0; border-left: 0; background: #fff; text-align: right; white-space: nowrap; }

.pane {
  display: flex;
  flex: 1;
  flex-direction: column;
  min-height: 0;
  padding-right: 1px;
  border-top: 1px solid #8c8c98;
  border-right: 1px solid #8c8c98;
  background: #ededed;
}
.pane-tools { display: flex; flex: none; height: 31px; padding: 0 0 2px 1px; border-top: 3px solid #fff; }
.pane-tools button { display: flex; flex: none; align-items: center; justify-content: center; width: 23px; }

.system { position: relative; display: flex; flex: none; height: 18px; border: solid #7ba3c4; border-width: 1px 0; background: #fff; }
.system select { flex: 1; margin-left: -9px; appearance: none; }
.chev {
  display: flex;
  align-items: center;
  justify-content: center;
  width: 18px;
  margin-right: 1px;
  border: 1px solid #b97a18;
  border-radius: 3px;
  background: linear-gradient(#ffe3a0, #ffa826 60%, #ffc95a);
  pointer-events: none;
}
.chev::before { content: ""; border: 3px solid transparent; border-top-color: #5a2a00; border-bottom: 0; }

.tree-box { display: flex; flex: 1; min-height: 0; margin: 1px 1px 0 0; border-top: 1px solid #8c8c98; background: #fff; }
.tree {
  flex: 1;
  min-width: 0;
  margin: 0 0 0 -26px;
  padding: 0;
  list-style: none;
  overflow: hidden;
  font-feature-settings: "hwid";
}
.fw { font-feature-settings: normal; }
.tree li { display: flex; align-items: center; height: 18px; white-space: nowrap; }
.tree li > span { flex: 1; min-width: 0; margin-left: 4px; padding-left: 1px; overflow: hidden; line-height: 18px; }
.tree i { position: relative; flex: none; width: 19px; height: 18px; }
.tree b { width: 16px; padding-left: 3px; color: #f00; font-weight: 400; line-height: 20px; }
.l2 { padding-left: 19px; }
.l3, .leaf { padding-left: 38px; }
.l2 i, .l3 i, .leaf i {
  background:
    repeating-linear-gradient(#999 0 1px, transparent 1px 2px) 9px 0 / 1px 100% no-repeat,
    repeating-linear-gradient(90deg, #999 0 1px, transparent 1px 2px) 9px 9px / 10px 1px no-repeat;
}
.last i {
  background:
    repeating-linear-gradient(#999 0 1px, transparent 1px 2px) 9px 0 / 1px 9px no-repeat,
    repeating-linear-gradient(90deg, #999 0 1px, transparent 1px 2px) 9px 9px / 10px 1px no-repeat;
}
.box::before {
  content: "";
  position: absolute;
  left: 5px;
  top: 5px;
  width: 9px;
  height: 9px;
  border: 1px solid #999;
  background: linear-gradient(#000, #000) center / 5px 1px no-repeat #fff;
}
.plus::before { background: linear-gradient(#000, #000) center / 5px 1px no-repeat, linear-gradient(#000, #000) center / 1px 5px no-repeat #fff; }
.tree li > .selected { padding-left: 0; height: 18px; border: 1px solid #555; background: #9e9da3; line-height: 16px; }

.scroll {
  display: flex;
  flex: none;
  flex-direction: column;
  width: 17px;
  background: repeating-conic-gradient(#fff 0 25%, #ededed 0 50%) 0 0 / 2px 2px;
}
.scroll-up { display: flex; flex: none; align-items: center; justify-content: center; height: 17px; border: solid #8c8c8c; border-width: 0 1px 1px 0; background: #f0f0f0; }
.scroll-up::before { content: ""; border: 4px solid transparent; border-bottom-color: #000; border-top: 0; }
.thumb { flex: 0 1 734px; margin-top: 75px; border: solid #a0a0a0; border-width: 0 1px 1px 0; background: #f0f0f0; }

.splitter { flex: none; width: 13px; padding: 398px 0 0 3px; background: #ededed; border-right: 1px solid #a0a0a0; box-shadow: inset 3px 0 #fff, inset 4px 0 #a0a0a0; }
.splitter button {
  display: flex;
  align-items: center;
  justify-content: center;
  width: 9px;
  height: 510px;
  border: 1px solid #8a959c;
  border-radius: 2px;
  background: linear-gradient(90deg, #fff 30%, #b5dcec 60%, #8fa6b2);
}
.splitter svg { width: 8px; height: 10px; }

/* document area */
.doc { display: flex; flex: 1; flex-direction: column; min-width: 0; padding: 4px 0 0 3px; border-top: 2px solid #a0a0a0; background: #fff; }
.bar {
  display: flex;
  flex: none;
  height: 24px;
  padding-left: 3px;
  border-top: 1px solid #a0a0a0;
  border-left: 1px solid #a0a0a0;
  background: #ededed;
  color: #a0a0a0;
}
.third { height: 26px; border-top-width: 2px; border-bottom: 1px solid #a0a0a0; }
.grip { flex: none; width: 3px; margin: 3px 3px 3px 0; border-right: 1px solid #a0a0a0; border-top: 1px solid #a0a0a0; border-bottom: 1px solid #a0a0a0; }
.bar svg { width: 16px; height: 16px; fill: none; stroke: #a0a0a0; }
.bar svg.big { width: 17px; height: 17px; }
.bar button { display: flex; flex: none; align-items: center; justify-content: center; width: 26px; }
.bar.second button { width: 25px; }
.bar.second .drop { width: 17px; }
.bar .drop::before { border-top-color: #a0a0a0; }
.bar .drop.dark::before { border-top-color: #000; }
.bar button.on { margin: 2px 2px 1px; width: 22px; background: #f8f8f8; }
.bar.second button.on { width: 21px; }
.bar .dark { color: #000; }
.glyph { font: 16px/16px "Liberation Serif", serif; }

.combo { position: relative; display: flex; flex: none; align-items: center; margin: 3px 1px; border: 1px solid #a0a0a0; }
.combo select { flex: 1; min-width: 0; height: 16px; padding: 0 4px; appearance: none; line-height: 16px; font-feature-settings: "hwid"; }
.combo::after { content: ""; position: absolute; right: 5px; top: 6px; border: 4px solid transparent; border-top-color: #a0a0a0; border-bottom: 0; }
.combo em { margin-left: 3px; font: bold 8px/14px "Liberation Serif", serif; }
.combo .t2 { margin-left: 0; padding-top: 2px; color: #000; font-size: 12px; }
.font { width: 90px; }
.size { width: 58px; }
.size select { padding: 0 1px; }
.zoom { width: 67px; background: #fff; color: #000; }
.zoom select { padding: 0 2px; }
.zoom::after { border-top-color: #000; }
.line { width: 79px; background: linear-gradient(#a0a0a0, #a0a0a0) 6px 8px / 53px 1px no-repeat; }

.bar .text { width: 66px; margin-right: 8px; justify-content: flex-start; white-space: nowrap; }
.bar .random { width: 76px; padding-left: 6px; }
.bar .strike { width: 62px; margin-right: 6px; }
.third .strike + .drop { width: 16px; margin-right: 6px; }
.third .text em { font-style: normal; }
.third .num { display: flex; width: 18px; font-size: 9px; line-height: 10px; }
.third sup { font-size: 9px; line-height: 6px; vertical-align: baseline; }
.third sub { padding-top: 5px; font-size: 9px; line-height: 10px; vertical-align: baseline; }
.third .no { width: 17px; font-size: 16px; font-feature-settings: "hwid"; }
.third .item { width: 17px; color: #d8141c; font-size: 15px; font-weight: 900; }
.third .gap { margin-right: 4px; }

/* sheet */
.sheet { flex: 1; min-height: 0; overflow: hidden; border-top: 2px solid #707070; border-left: 1px solid #707070; background: #f0f0f0; }
table { width: 736px; table-layout: fixed; border-collapse: separate; border-spacing: 0; font-size: 13px; line-height: 13px; font-feature-settings: "hwid"; }
.c33 { width: 33px; } .c32 { width: 32px; } .c26 { width: 26px; } .c21 { width: 21px; } .c18 { width: 18px; } .c5 { width: 5px; } .c3 { width: 3px; }
.h5 { height: 5px; } .h9 { height: 9px; } .h10 { height: 10px; } .h18 { height: 18px; } .h19 { height: 19px; } .h32 { height: 32px; }
.h37 { height: 37px; } .h40 { height: 40px; } .h42 { height: 42px; } .h43 { height: 43px; } .h48 { height: 48px; } .h65 { height: 65px; }

th, td { padding: 0 0 2px; text-align: center; vertical-align: middle; }
.h5 > *, .h9 > *, .h10 > *, thead th { padding-bottom: 0; }
thead th { border-right: 1px solid #a8a595; border-bottom: 1px solid #d8d8d8; background: #f0f0f0; font: bold 12px/14px "Liberation Serif", serif; white-space: nowrap; }
thead .corner {
  background:
    linear-gradient(135deg, #f0f0f0 50%, transparent 50%) 22px 6px / 11px 11px no-repeat,
    repeating-linear-gradient(135deg, #999 0 1px, transparent 1px 3px) 22px 6px / 11px 11px no-repeat #f0f0f0;
}
tbody th { border-right: 1px solid #a0a0a0; border-bottom: 1px solid #a0a0a0; background: #f0f0f0; box-shadow: inset 0 1px #fff; font-weight: 400; }
.h5 div { height: 4px; line-height: 4px; overflow: hidden; }
.h9 div { height: 8px; line-height: 8px; overflow: hidden; }
.h10 div { height: 9px; line-height: 9px; overflow: hidden; }

td { border-right: 1px solid #000; border-bottom: 1px solid #000; background: #e0e0e0; }
td.plain { border: 0; }
td.edge { border-right: 2px solid #000; border-bottom: 0; }
td.end { border-right: 2px solid #000; }
td.o { background: #f0c9a6; }
td.w { background: #fff; }
td.title { position: relative; padding-bottom: 6px; border: 0; font-size: 22px; line-height: 30px; }
.title::before { content: ""; position: absolute; inset: -2px -1px 0 -2px; border: 3px solid #1a1a1a; }
.title::after { content: ""; position: absolute; right: -2px; bottom: -1px; width: 6px; height: 6px; border: solid #e0e0e0; border-width: 1px 0 0 1px; background: #1a1a1a; }

.lite td { border-color: #f0f0f0; }
.lite .form-no { padding-left: 7px; text-align: left; border-bottom: 2px solid #000; white-space: nowrap; }
.lite .no-label { padding-right: 2px; text-align: right; border-bottom: 2px solid #000; }
.lite .serial { text-align: right; padding-right: 2px; }
.lite .kb { border-bottom-color: #000; }
.lite .kr { border-right-color: #000; }
.lite .tick { border-color: #000; background: #fff; }
.thick td:not(.plain) { border-bottom: 2px solid #000; }

td.rule { padding-left: 3px; text-align: left; }
td.pre { white-space: pre; }
td.loose { line-height: 21px; }
td.sign { padding-left: 2px; border-color: #f0f0f0; line-height: 17px; text-align: left; }
td.soft { border-bottom-color: #f0f0f0; }
td.soft:not(.end), td.soft-r { border-right-color: #f0f0f0; }
.date span { padding: 0 10px; }
```
